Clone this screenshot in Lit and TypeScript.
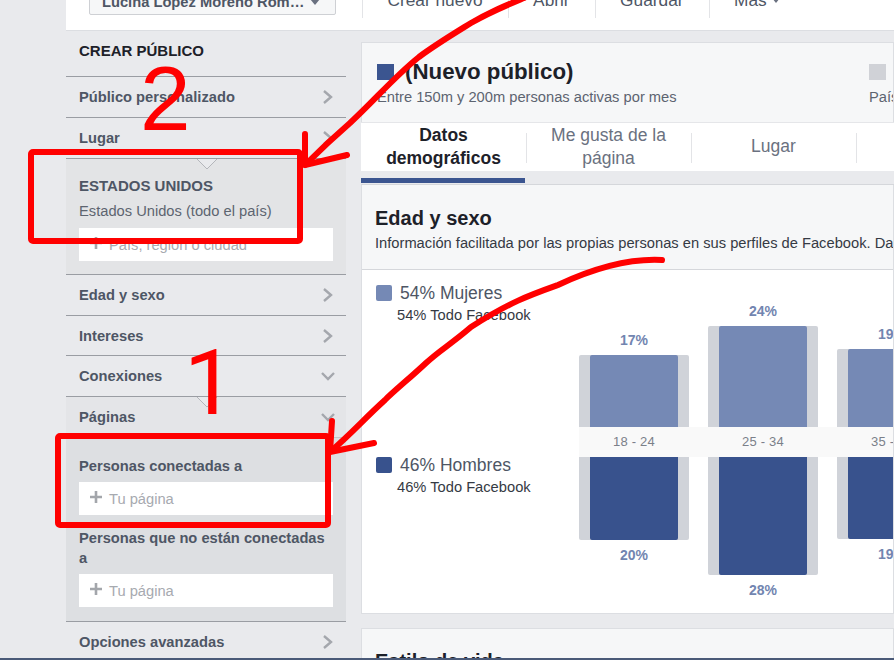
import { LitElement, html, css, svg } from "lit";
import { customElement } from "lit/decorators.js";

const chevron = (down: boolean) => html`<svg class="chev" width="16" height="16" viewBox="0 0 16 16">
  <path d=${down ? "M2 5 L8 11 L14 5" : "M4 2 L11 8 L4 14"} fill="none" stroke="#a4a7ad" stroke-width="2.4"/>
</svg>`;
const plus = html`<svg class="plus" width="14" height="14" viewBox="0 0 14 14"><path d="M7 1V13M1 7H13" stroke="#a3a6ab" stroke-width="2.6"/></svg>`;
const notch = html`<svg class="notch" viewBox="0 0 20 12"><path d="M0 1 L10 11 L20 1" fill="#e9eaed" stroke="#b4b6bb"/></svg>`;

const groups = [
  { label: "18 - 24", f: "17%", m: "20%", fh: 72, mh: 83 },
  { label: "25 - 34", f: "24%", m: "28%", fh: 101, mh: 118 },
  { label: "35 - 44", f: "19%", m: "19%", fh: 78, mh: 82 },
];

@customElement("app-root")
export class AppRoot extends LitElement {
  static styles = css`
    :host { display: block; position: relative; width: 894px; height: 660px; overflow: hidden; background: #e9eaed; font-family: "Liberation Sans", Arial, sans-serif; color: #4e5665; }
    .page { padding-left: 66px; box-sizing: border-box; width: 894px; height: 660px; overflow: hidden; display: flex; flex-direction: column; }
    .topbar { height: 30px; flex: none; background: #fff; border-bottom: 1px solid #dcdee2; display: flex; align-items: flex-end; padding-left: 23px; box-sizing: content-box; overflow: hidden; }
    .acct { width: 247px; height: 24px; margin-bottom: 15px; box-sizing: border-box; border: 1px solid #ced0d4; border-radius: 2px; background: #f6f7f8; font-weight: bold; font-size: 14.7px; color: #4e5665; display: flex; align-items: center; padding: 0 12px 3px 12px; gap: 6px; white-space: nowrap; }
    .caret { width: 0; height: 0; border: 5px solid transparent; border-top: 6px solid #6a7180; border-bottom: 0; }
    .actions { display: flex; margin-left: 26px; margin-bottom: 12px; height: 30px; }
    .actions span { border-left: 1px solid #e3e4e7; padding: 0 25px 6px 24.5px; font-size: 17.3px; line-height: 20px; color: #4e5665; display: flex; gap: 5px; align-items: center; height: 30px; box-sizing: border-box; }
    .actions .caret { border-width: 4px; border-top-width: 5px; border-bottom: 0; margin-top: 1px; }

    .cols { display: flex; gap: 15px; flex: 1; min-height: 0; }
    .side { width: 280px; flex: none; }
    .title { height: 46px; padding: 12px 13px 0; box-sizing: border-box; font-size: 15px; font-weight: bold; color: #1d2129; line-height: 16px; border-bottom: 1px solid #9a9da3; }
    .row { height: 40px; box-sizing: border-box; display: flex; align-items: center; justify-content: space-between; padding: 0 10px 0 13px; font-size: 14.7px; font-weight: bold; border-bottom: 1px solid #9a9da3; position: relative; }
    .row.tall { height: 41px; }
    .row.open { background: #e4e5e8; border-bottom-color: #c4c6ca; }
    .row.noline { border-bottom: 0; }
    .panel { background: #e3e4e6; padding: 19px 13px 14px; border-bottom: 1px solid #9a9da3; position: relative; height: 116px; box-sizing: border-box; }
    .panel.dark { background: #dddfe2; height: 184px; padding-top: 18px; }
    .notch { position: absolute; top: -1px; left: 131px; width: 20px; height: 12px; overflow: hidden; }
    .caps { font-size: 15px; font-weight: bold; line-height: 16px; }
    .sub { font-size: 14.7px; line-height: 16px; margin-top: 9px; color: #5d6470; }
    .field { background: #fff; height: 33px; display: flex; align-items: center; gap: 6px; padding-left: 10px; font-size: 14.7px; color: #a7aab0; margin-top: 9px; }
    .plus { margin-top: -4px; }
    .lbl { font-size: 14.7px; font-weight: bold; line-height: 20px; }
    .lbl.next { margin-top: 13px; }
    .dark .field { margin-top: 6px; }

    .main { flex: 1; min-width: 0; padding-top: 11px; }
    .summary { background: #f6f7f8; border: 1px solid #dcdee2; border-bottom: 0; height: 80px; box-sizing: border-box; display: flex; padding: 17px 0 0 15px; justify-content: space-between; width: 533px; }
    .name { display: flex; align-items: center; gap: 11px; font-size: 22.3px; font-weight: bold; color: #1d2129; line-height: 24px; }
    .sw { width: 17px; height: 16px; background: #3b5590; display: block; }
    .sw.grey { background: #d0d2d7; }
    .reach { font-size: 14.7px; line-height: 16px; margin-top: 5px; color: #5d6470; }
    .other { width: 24px; overflow: hidden; white-space: nowrap; }
    .other .name { height: 24px; }
    .tabs { display: flex; background: #fff; height: 49px; width: 533px; border-top: 1px solid #e5e6e9; box-sizing: border-box; }
    .tab { width: 165px; flex: none; font-size: 17.5px; line-height: 23px; text-align: center; color: #6a7180; display: flex; align-items: center; justify-content: center; position: relative; box-sizing: border-box; padding-bottom: 1px; }
    .tab + .tab::before { content: ""; position: absolute; left: 0; top: 10px; height: 30px; width: 1px; background: #e3e4e7; }
    .tab.on { color: #1d2129; font-weight: bold; }
    .tabline { height: 14px; width: 533px; box-sizing: border-box; border-bottom: 1px solid #d5d7db; padding-top: 7px; }
    .tabline i { display: block; width: 164px; height: 5px; background: #3b5590; }
    .card { width: 533px; box-sizing: border-box; border: 1px solid #dcdee2; background: #fff; border-top: 0; height: 429px; }
    .cardhead { background: #f6f7f8; height: 85px; box-sizing: border-box; padding: 22px 13px 0; border-bottom: 1px solid #d5d7db; overflow: hidden; white-space: nowrap; }
    .cardhead h2 { margin: 0; font-size: 20px; line-height: 22px; color: #1d2129; }
    .cardhead p { margin: 6px 0 0; font-size: 14.7px; line-height: 16px; color: #353a44; }
    .cardbody { display: flex; }
    .legend { width: 203px; flex: none; padding: 13px 0 0 14px; box-sizing: border-box; }
    .lg { height: 172px; }
    .lghead { display: flex; align-items: center; gap: 8px; font-size: 17.5px; line-height: 20px; color: #4e5665; }
    .lgsw { width: 16px; height: 16px; border-radius: 2px; background: #7589b5; }
    .lgsw.m { background: #38528d; }
    .lgsub { font-size: 14.7px; line-height: 16px; margin: 4px 0 0 21px; color: #353a44; white-space: nowrap; }
    .chart { margin-left: 14px; width: 400px; overflow: hidden; }
    .chartrow { display: flex; gap: 19px; width: 400px; }
    .chartrow.top { height: 157px; align-items: flex-end; }
    .g { width: 110px; flex: none; display: flex; flex-direction: column; align-items: center; }
    .pct { font-size: 14px; font-weight: bold; color: #7285b0; line-height: 16px; }
    .top .pct { margin-bottom: 7px; }
    .bottom .pct { margin-top: 7px; }
    .track { width: 110px; background: #d0d3d9; display: flex; justify-content: center; }
    .track.up { border-radius: 2px 2px 0 0; }
    .track.down { border-radius: 0 0 2px 2px; }
    .bar { width: 88px; background: #7589b5; border-radius: 2px 2px 0 0; }
    .bar.m { background: #38528d; border-radius: 0 0 2px 2px; }
    .band { background: #f9f9f9; height: 30px; display: flex; gap: 19px; box-sizing: border-box; }
    .band span { width: 110px; flex: none; text-align: center; font-size: 13px; line-height: 30px; color: #7b8089; letter-spacing: .2px; }
    .gap { height: 14px; width: 533px; }
    .next-card { width: 533px; background: #f6f7f8; border: 1px solid #dcdee2; border-bottom: 0; height: 60px; box-sizing: border-box; padding: 21px 13px 0; font-size: 20px; font-weight: bold; line-height: 22px; color: #1d2129; }
    .edge { position: absolute; left: 0; right: 0; bottom: 0; height: 2px; background: #4a5a78; }
    .ink { position: absolute; inset: 0; pointer-events: none; }
    .ink text { font-family: "Liberation Sans", Arial, sans-serif; font-size: 91px; fill: #f00; }
    .ink text.one { font-family: Roboto, sans-serif; }
  `;

  render() {
    return html`
      <div class="page">
        <div class="topbar">
          <div class="acct"><span>Lucina López Moreno Rom…</span><i class="caret"></i></div>
          <div class="actions">
            <span>Crear nuevo</span><span>Abrir</span><span>Guardar</span><span>Más <i class="caret"></i></span>
          </div>
        </div>
        <div class="cols">
          <aside class="side">
            <div class="title">CREAR PÚBLICO</div>
            <div class="row tall">Público personalizado ${chevron(false)}</div>
            <div class="row tall">Lugar ${chevron(false)}</div>
            <div class="panel">
              ${notch}
              <div class="caps">ESTADOS UNIDOS</div>
              <div class="sub">Estados Unidos (todo el país)</div>
              <div class="field">${plus}País, región o ciudad</div>
            </div>
            <div class="row tall">Edad y sexo ${chevron(false)}</div>
            <div class="row">Intereses ${chevron(false)}</div>
            <div class="row tall">Conexiones ${chevron(true)}</div>
            <div class="row open tall">
              ${notch}
              Páginas ${chevron(true)}
            </div>
            <div class="panel dark">
              <div class="lbl">Personas conectadas a</div>
              <div class="field">${plus}Tu página</div>
              <div class="lbl next">Personas que no están conectadas a</div>
              <div class="field">${plus}Tu página</div>
            </div>
            <div class="row noline">Opciones avanzadas ${chevron(false)}</div>
          </aside>
          <main class="main">
            <div class="summary">
              <div>
                <div class="name"><i class="sw"></i>(Nuevo público)</div>
                <div class="reach">Entre 150m y 200m personas activas por mes</div>
              </div>
              <div class="other">
                <div class="name"><i class="sw grey"></i></div>
                <div class="reach">País</div>
              </div>
            </div>
            <div class="tabs">
              <div class="tab on">Datos<br />demográficos</div>
              <div class="tab">Me gusta de la<br />página</div>
              <div class="tab">Lugar</div>
              <div class="tab"></div>
            </div>
            <div class="tabline"><i></i></div>
            <section class="card">
              <div class="cardhead">
                <h2>Edad y sexo</h2>
                <p>Información facilitada por las propias personas en sus perfiles de Facebook. Datos</p>
              </div>
              <div class="cardbody">
                <div class="legend">
                  <div class="lg">
                    <div class="lghead"><i class="lgsw"></i>54% Mujeres</div>
                    <div class="lgsub">54% Todo Facebook</div>
                  </div>
                  <div class="lg">
                    <div class="lghead"><i class="lgsw m"></i>46% Hombres</div>
                    <div class="lgsub">46% Todo Facebook</div>
                  </div>
                </div>
                <div class="chart">
                  <div class="chartrow top">
                    ${groups.map((g) => html`<div class="g"><div class="pct">${g.f}</div><div class="track up"><div class="bar" style="height:${g.fh}px"></div></div></div>`)}
                  </div>
                  <div class="band">${groups.map((g) => html`<span>${g.label}</span>`)}</div>
                  <div class="chartrow bottom">
                    ${groups.map((g) => html`<div class="g"><div class="track down"><div class="bar m" style="height:${g.mh}px"></div></div><div class="pct">${g.m}</div></div>`)}
                  </div>
                </div>
              </div>
            </section>
            <div class="gap"></div>
            <div class="next-card">Estilo de vida</div>
          </main>
        </div>
      </div>
      <div class="edge"></div>
      <svg class="ink" width="894" height="660" viewBox="0 0 894 660">
        ${svg`
          <text x="140" y="130">2</text>
          <text class="one" x="184" y="414">1</text>
          <rect x="31" y="152" width="269" height="89" rx="2" fill="none" stroke="#f00" stroke-width="6"/>
          <rect x="58" y="436" width="270" height="89" rx="2" fill="none" stroke="#f00" stroke-width="6"/>
          <g fill="none" stroke="#f00" stroke-width="6" stroke-linecap="round" stroke-linejoin="round">
            <path d="M524 -2 C500 8 490 12 471 23 C450 36 435 45 419 57 C395 76 375 100 350 123 C335 136 320 150 305 165"/>
            <path d="M305 134 L305 165 L347 155"/>
            <path d="M662 260 C625 258 590 270 558 285 C530 295 510 302 471 327 C450 345 440 350 426 363 C410 378 395 390 385 400 C365 418 350 435 331 451"/>
            <path d="M332 421 L330 452 L374 443"/>
          </g>
        `}
      </svg>
    `;
  }
}
